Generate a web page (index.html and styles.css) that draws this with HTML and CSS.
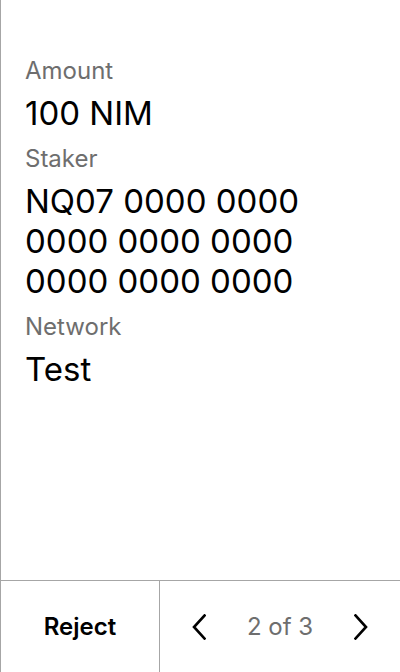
FILE: index.html
```html
<!DOCTYPE html>
<html>
<head>
<meta charset="utf-8">
<link rel="stylesheet" href="styles.css">
</head>
<body>
<div class="screen">
  <main class="content">
    <div class="field">
      <div class="label">Amount</div>
      <div class="value">100 NIM</div>
    </div>
    <div class="field">
      <div class="label">Staker</div>
      <div class="value">NQ07 0000 0000<br>0000 0000 0000<br>0000 0000 0000</div>
    </div>
    <div class="field">
      <div class="label">Network</div>
      <div class="value">Test</div>
    </div>
  </main>
  <footer class="footer">
    <div class="reject">Reject</div>
    <div class="nav">
      <svg class="chev" width="14" height="26" viewBox="0 0 14 26"><path d="M12.5 1.5 L2 13 L12.5 24.5" fill="none" stroke="#000" stroke-width="2.6" stroke-linecap="square" stroke-linejoin="miter"/></svg>
      <span class="page">2 of 3</span>
      <svg class="chev" width="14" height="26" viewBox="0 0 14 26"><path d="M1.5 1.5 L12 13 L1.5 24.5" fill="none" stroke="#000" stroke-width="2.6" stroke-linecap="square" stroke-linejoin="miter"/></svg>
    </div>
  </footer>
</div>
</body>
</html>
```
FILE: styles.css
```css
* { box-sizing: border-box; }
html, body { margin: 0; padding: 0; background: #fff; }
body { font-family: Inter, "Noto Sans", sans-serif; color: #000; }
.screen {
  width: 400px;
  height: 672px;
  border-left: 1px solid #a6a6a6;
  display: flex;
  flex-direction: column;
}
.content {
  flex: 1;
  padding: 55px 24px 0 24px;
  display: flex;
  flex-direction: column;
  gap: 10px;
}
.field { display: flex; flex-direction: column; gap: 6px; }
.label { font-size: 24px; line-height: 32px; color: #6e6e6e; }
.value { font-size: 33px; line-height: 40px; color: #000; }
.footer {
  height: 92px;
  border-top: 1px solid #a6a6a6;
  display: flex;
}
.reject {
  width: 159px;
  border-right: 1px solid #a6a6a6;
  display: flex;
  align-items: center;
  justify-content: center;
  font-size: 24px;
  font-weight: 600;
}
.nav {
  flex: 1;
  display: flex;
  align-items: center;
  justify-content: space-between;
  padding: 0 32px 0 32px;
}
.page { font-size: 24px; color: #6e6e6e; }
.chev { display: block; }
```
